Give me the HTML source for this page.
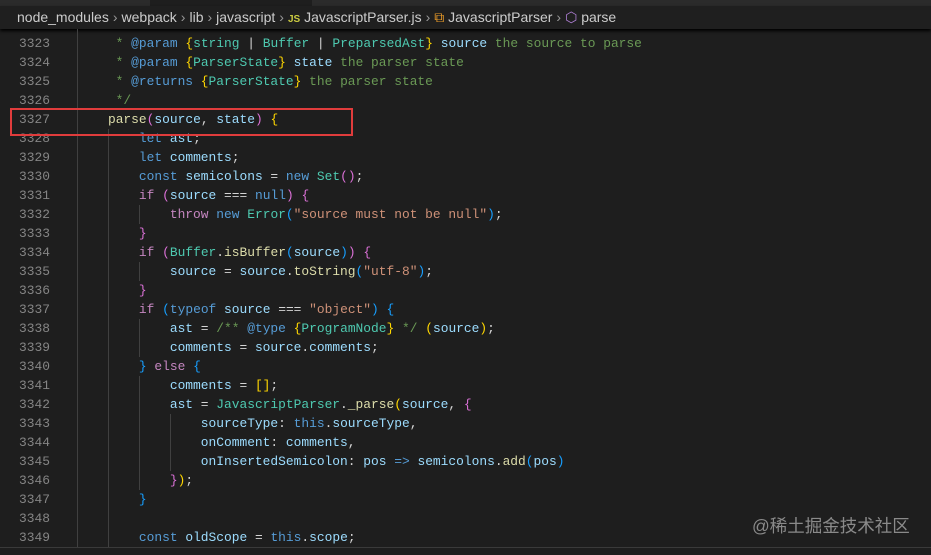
<!DOCTYPE html>
<html><head><meta charset="utf-8"><style>
body{margin:0;width:931px;height:555px;background:#1e1e1e;overflow:hidden;position:relative;font-family:"Liberation Sans",sans-serif}
#top{position:absolute;left:0;top:0;width:931px;height:6px;background:#2b2b2b}
#top2{position:absolute;left:150px;top:0;width:162px;height:6px;background:#1e1e1e}
#bc{position:absolute;left:0;top:6px;width:931px;height:23px;background:#1f1f1f;box-shadow:0 2px 3px #000;color:#cccccc;font-size:14px;line-height:23px;white-space:nowrap;font-family:"Liberation Sans",sans-serif}
#bc .s{color:#999;margin:0 4px}
.ln{position:absolute;left:0;width:50px;text-align:right;color:#858585}
.cd{position:absolute;left:77px;white-space:pre}
.row{position:absolute;left:0;width:931px;height:19px;font-family:"Liberation Mono",monospace;font-size:12.9px;line-height:19px}
.g{position:absolute;top:29px;width:1px;height:518px;background:#404040}
.k{color:#569cd6}.c{color:#c586c0}.v{color:#9cdcfe}.f{color:#dcdcaa}.t{color:#4ec9b0}.s{color:#ce9178}.m{color:#6a9955}.y{color:#ffd700}.p{color:#da70d6}.b{color:#179fff}.w{color:#d4d4d4}
#box{position:absolute;left:10px;top:108px;width:339px;height:24px;border:2px solid #e03c3c}
#wm{position:absolute;left:752px;top:513px;color:#8a8a8a;font-size:17.5px;font-family:"Liberation Sans","Noto Sans CJK SC",sans-serif}
#bl{position:absolute;left:0;top:547px;width:931px;height:1px;background:#3a3a3a}
</style></head><body>
<div id="top"></div><div id="top2"></div>
<div id="bc"><span style="margin-left:17px">node_modules</span><span class="s">›</span>webpack<span class="s">›</span>lib<span class="s">›</span>javascript<span class="s">›</span><span style="color:#cbcb41;font-weight:bold;font-size:10px">JS</span> JavascriptParser.js<span class="s">›</span><span style="color:#ee9d28">⧉</span> JavascriptParser<span class="s">›</span><span style="color:#b180d7">⬡</span> parse</div>
<div class="g" style="left:77px"></div><div class="g" style="left:108px;top:129px;height:418px"></div>
<div class="g" style="left:139px;top:205px;height:19px"></div>
<div class="g" style="left:139px;top:262px;height:19px"></div>
<div class="g" style="left:139px;top:319px;height:38px"></div>
<div class="g" style="left:139px;top:376px;height:114px"></div>
<div class="g" style="left:170px;top:414px;height:57px"></div>

<div class="row" style="top:34px"><span class="ln">3323</span><span class="cd w"><span class="m">     * </span><span class="k">@param</span> <span class="y">{</span><span class="t">string</span> <span class="w">|</span> <span class="t">Buffer</span> <span class="w">|</span> <span class="t">PreparsedAst</span><span class="y">}</span> <span class="v">source</span><span class="m"> the source to parse</span></span></div>
<div class="row" style="top:53px"><span class="ln">3324</span><span class="cd w"><span class="m">     * </span><span class="k">@param</span> <span class="y">{</span><span class="t">ParserState</span><span class="y">}</span> <span class="v">state</span><span class="m"> the parser state</span></span></div>
<div class="row" style="top:72px"><span class="ln">3325</span><span class="cd w"><span class="m">     * </span><span class="k">@returns</span> <span class="y">{</span><span class="t">ParserState</span><span class="y">}</span><span class="m"> the parser state</span></span></div>
<div class="row" style="top:91px"><span class="ln">3326</span><span class="cd m">     */</span></div>
<div class="row" style="top:110px"><span class="ln">3327</span><span class="cd w">    <span class="f">parse</span><span class="p">(</span><span class="v">source</span>, <span class="v">state</span><span class="p">)</span> <span class="y">{</span></span></div>
<div class="row" style="top:129px"><span class="ln">3328</span><span class="cd w">        <span class="k">let</span> <span class="v">ast</span>;</span></div>
<div class="row" style="top:148px"><span class="ln">3329</span><span class="cd w">        <span class="k">let</span> <span class="v">comments</span>;</span></div>
<div class="row" style="top:167px"><span class="ln">3330</span><span class="cd w">        <span class="k">const</span> <span class="v">semicolons</span> = <span class="k">new</span> <span class="t">Set</span><span class="p">()</span>;</span></div>
<div class="row" style="top:186px"><span class="ln">3331</span><span class="cd w">        <span class="c">if</span> <span class="p">(</span><span class="v">source</span> === <span class="k">null</span><span class="p">)</span> <span class="p">{</span></span></div>
<div class="row" style="top:205px"><span class="ln">3332</span><span class="cd w">            <span class="c">throw</span> <span class="k">new</span> <span class="t">Error</span><span class="b">(</span><span class="s">"source must not be null"</span><span class="b">)</span>;</span></div>
<div class="row" style="top:224px"><span class="ln">3333</span><span class="cd w">        <span class="p">}</span></span></div>
<div class="row" style="top:243px"><span class="ln">3334</span><span class="cd w">        <span class="c">if</span> <span class="p">(</span><span class="t">Buffer</span>.<span class="f">isBuffer</span><span class="b">(</span><span class="v">source</span><span class="b">)</span><span class="p">)</span> <span class="p">{</span></span></div>
<div class="row" style="top:262px"><span class="ln">3335</span><span class="cd w">            <span class="v">source</span> = <span class="v">source</span>.<span class="f">toString</span><span class="b">(</span><span class="s">"utf-8"</span><span class="b">)</span>;</span></div>
<div class="row" style="top:281px"><span class="ln">3336</span><span class="cd w">        <span class="p">}</span></span></div>
<div class="row" style="top:300px"><span class="ln">3337</span><span class="cd w">        <span class="c">if</span> <span class="b">(</span><span class="k">typeof</span> <span class="v">source</span> === <span class="s">"object"</span><span class="b">)</span> <span class="b">{</span></span></div>
<div class="row" style="top:319px"><span class="ln">3338</span><span class="cd w">            <span class="v">ast</span> = <span class="m">/** </span><span class="k">@type</span> <span class="y">{</span><span class="t">ProgramNode</span><span class="y">}</span><span class="m"> */</span> <span class="y">(</span><span class="v">source</span><span class="y">)</span>;</span></div>
<div class="row" style="top:338px"><span class="ln">3339</span><span class="cd w">            <span class="v">comments</span> = <span class="v">source</span>.<span class="v">comments</span>;</span></div>
<div class="row" style="top:357px"><span class="ln">3340</span><span class="cd w">        <span class="b">}</span> <span class="c">else</span> <span class="b">{</span></span></div>
<div class="row" style="top:376px"><span class="ln">3341</span><span class="cd w">            <span class="v">comments</span> = <span class="y">[]</span>;</span></div>
<div class="row" style="top:395px"><span class="ln">3342</span><span class="cd w">            <span class="v">ast</span> = <span class="t">JavascriptParser</span>.<span class="f">_parse</span><span class="y">(</span><span class="v">source</span>, <span class="p">{</span></span></div>
<div class="row" style="top:414px"><span class="ln">3343</span><span class="cd w">                <span class="v">sourceType</span>: <span class="k">this</span>.<span class="v">sourceType</span>,</span></div>
<div class="row" style="top:433px"><span class="ln">3344</span><span class="cd w">                <span class="v">onComment</span>: <span class="v">comments</span>,</span></div>
<div class="row" style="top:452px"><span class="ln">3345</span><span class="cd w">                <span class="v">onInsertedSemicolon</span>: <span class="v">pos</span> <span class="k">=&gt;</span> <span class="v">semicolons</span>.<span class="f">add</span><span class="b">(</span><span class="v">pos</span><span class="b">)</span></span></div>
<div class="row" style="top:471px"><span class="ln">3346</span><span class="cd w">            <span class="p">}</span><span class="y">)</span>;</span></div>
<div class="row" style="top:490px"><span class="ln">3347</span><span class="cd w">        <span class="b">}</span></span></div>
<div class="row" style="top:509px"><span class="ln">3348</span></div>
<div class="row" style="top:528px"><span class="ln">3349</span><span class="cd w">        <span class="k">const</span> <span class="v">oldScope</span> = <span class="k">this</span>.<span class="v">scope</span>;</span></div>
<div id="box"></div>
<div id="wm">@稀土掘金技术社区</div>
<div id="bl"></div>
</body></html>
